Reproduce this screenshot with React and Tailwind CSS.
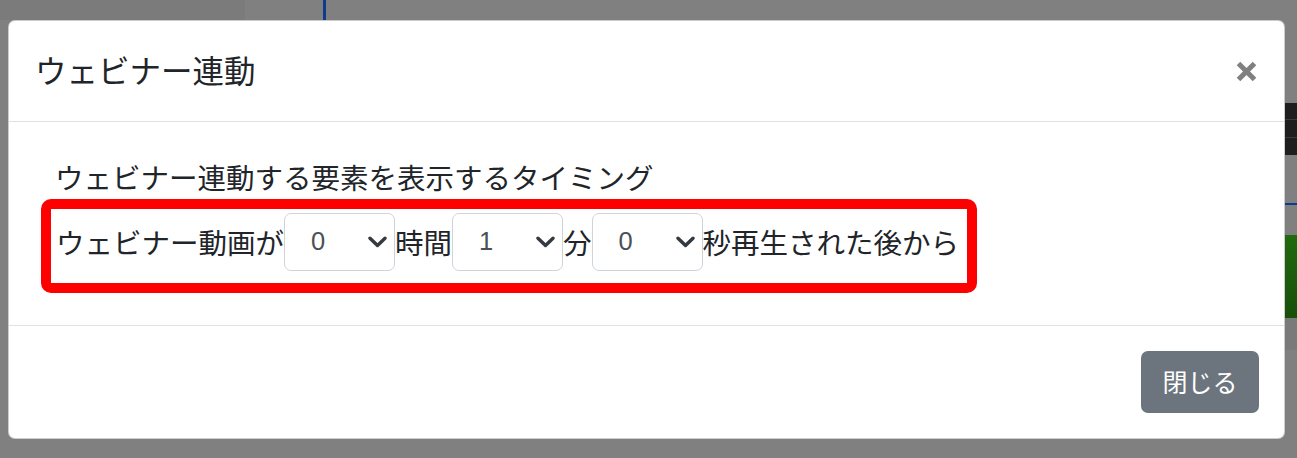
import React from "react";

function Chevron() {
  return (
    <svg width="19" height="12" viewBox="0 0 19 12" fill="none">
      <path d="M2 2.2l7.5 7.3 7.5-7.3" stroke="#343a40" strokeWidth="3.4" strokeLinecap="round" strokeLinejoin="round" />
    </svg>
  );
}

function Sel({ value }) {
  return (
    <div className="flex items-center justify-between w-[111px] h-[58px] border border-[#ced4da] rounded-[7px] bg-white pl-[26px] pr-[7px]">
      <span className="font-['Liberation_Sans',sans-serif] text-[25.5px] text-[#495057] leading-none">{value}</span>
      <Chevron />
    </div>
  );
}

export default function App() {
  return (
    <div className="relative w-[1297px] h-[458px] bg-[#808080] overflow-hidden font-['Noto_Sans_CJK_JP','Noto_Sans',sans-serif] text-[#212529]">
      {/* background page content seen through backdrop */}
      <div className="absolute left-0 top-0 w-[245px] h-[20px] bg-[#7b7b7b]" />
      <div className="absolute left-[323px] top-0 w-[3px] h-[20px] bg-[#0f3c8a]" />
      <div className="absolute left-[1285px] top-[103px] w-[12px] h-[52px] bg-[#1e1e1e]" />
      <div className="absolute left-[1285px] top-[119px] w-[12px] h-[1px] bg-[#3a3a3a]" />
      <div className="absolute left-[1285px] top-[137px] w-[12px] h-[1px] bg-[#3a3a3a]" />
      <div className="absolute left-[1285px] top-[203px] w-[12px] h-[2px] bg-[#0f3c8a]" />
      <div className="absolute left-[1285px] top-[235px] w-[12px] h-[83px] bg-gradient-to-b from-[#216a0d] to-[#184f0a]" />
      <div className="absolute left-[1285px] top-[318px] w-[12px] h-[32px] bg-[#7a7a7a]" />

      {/* modal */}
      <div className="absolute left-[8px] top-[20px] w-[1277px] h-[419px] bg-white border border-[rgba(0,0,0,0.2)] rounded-[7px] flex flex-col">
        <div className="h-[101px] border-b border-[#dee2e6] flex items-center justify-between pl-[26px] pr-[27px]">
          <div className="text-[31.5px] leading-[1.2] -mt-[2px]">ウェビナー連動</div>
          <svg width="21" height="21" viewBox="0 0 21 21">
            <path d="M2.5 2.5l16 16M18.5 2.5l-16 16" stroke="#808080" strokeWidth="5" />
          </svg>
        </div>
        <div className="pt-[34px] pb-[32px] pl-[32px] border-b border-[#dee2e6]">
          <div className="ml-[14px] text-[28.5px] leading-[42px]">ウェビナー連動する要素を表示するタイミング</div>
          <div className="mt-[1px] w-fit flex items-center border-[10px] border-[#ff0000] rounded-[10px] pl-[5px] pr-[8px] pt-[4px] pb-[12px] text-[28.5px] leading-[42px]">
            <span>ウェビナー動画が</span>
            <Sel value="0" />
            <span>時間</span>
            <Sel value="1" />
            <span>分</span>
            <Sel value="0" />
            <span>秒再生された後から</span>
          </div>
        </div>
        <div className="flex-1 flex justify-end items-start pt-[25px] pr-[25px]">
          <div className="w-[118px] h-[62px] rounded-[7px] bg-[#6c757d] text-white text-[25px] flex items-center justify-center">閉じる</div>
        </div>
      </div>
    </div>
  );
}
